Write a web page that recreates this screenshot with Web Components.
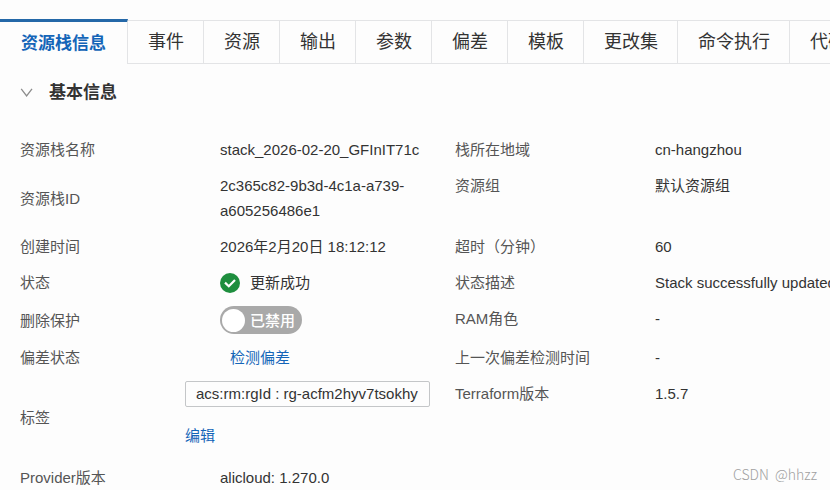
<!DOCTYPE html>
<html lang="zh-CN">
<head>
	<meta charset="UTF-8">
	<meta name="viewport" content="width=device-width, initial-scale=1">
	<title>资源栈信息</title>
	<style>
		body {
			margin: 0;
			overflow: hidden;
			background: #fdfdfd;
			color: #333;
			font: 15px/25px "Liberation Sans", "Noto Sans CJK SC", sans-serif;
		}
	</style>
</head>
<body>

<stack-page>
	<tab-strip>
		<tab-item active>资源栈信息</tab-item>
		<tab-item>事件</tab-item>
		<tab-item>资源</tab-item>
		<tab-item>输出</tab-item>
		<tab-item>参数</tab-item>
		<tab-item>偏差</tab-item>
		<tab-item>模板</tab-item>
		<tab-item>更改集</tab-item>
		<tab-item>命令执行</tab-item>
		<tab-item>代码</tab-item>
	</tab-strip>

	<info-section heading="基本信息">
		<info-field label="资源栈名称">stack_2026-02-20_GFInIT71c</info-field>
		<info-field label="栈所在地域">cn-hangzhou</info-field>

		<info-field label="资源栈ID">2c365c82-9b3d-4c1a-a739-a605256486e1</info-field>
		<info-field label="资源组">默认资源组</info-field>

		<info-field label="创建时间">2026年2月20日 18:12:12</info-field>
		<info-field label="超时（分钟）">60</info-field>

		<info-field label="状态"><status-text>更新成功</status-text></info-field>
		<info-field label="状态描述">Stack&nbsp;successfully&nbsp;updated</info-field>

		<info-field label="删除保护"><toggle-switch label="已禁用"></toggle-switch></info-field>
		<info-field label="RAM角色">-</info-field>

		<info-field label="偏差状态"><text-link indent>检测偏差</text-link></info-field>
		<info-field label="上一次偏差检测时间">-</info-field>

		<info-field label="标签" wide>
			<tag-list>
				<tag-box>acs:rm:rgId : rg-acfm2hyv7tsokhy</tag-box>
				<text-link>编辑</text-link>
			</tag-list>
		</info-field>
		<info-field label="Terraform版本">1.5.7</info-field>

		<info-field label="Provider版本">alicloud: 1.270.0</info-field>
	</info-section>

	<water-mark slot="mark">CSDN&nbsp; @hhzz</water-mark>
</stack-page>

<script>
	// Base class: attaches an open shadow root and fills it with render()
	class Base extends HTMLElement
	{
		constructor() {
			super();
			this.attachShadow({mode: 'open'});
		}

		connectedCallback() {
			this.shadowRoot.innerHTML = this.render();
		}
	}

	customElements.define('stack-page', class extends Base {
		render() {
			return `
				<style>
					:host { display: block; position: relative; min-height: 100vh; padding-top: 19px; box-sizing: border-box; }
				</style>
				<main><slot></slot></main>
				<slot name="mark"></slot>`;
		}
	});

	customElements.define('tab-strip', class extends Base {
		render() {
			return `
				<style>
					:host { display: block; }
					nav { display: flex; height: 45px; overflow: hidden; }
				</style>
				<nav role="tablist"><slot></slot></nav>`;
		}
	});

	customElements.define('tab-item', class extends Base {
		render() {
			return `
				<style>
					:host { display: flex; flex: none; }
					button {
						margin: 1px 0 0;
						padding: 0 19px 0 20px;
						border: solid #e3e4e6;
						border-width: 1px 1px 1px 0;
						background: none;
						color: #333;
						font: inherit;
						font-size: 18px;
						white-space: nowrap;
						cursor: pointer;
					}
					:host([active]) button {
						margin: 0;
						padding: 0 21px;
						border-top: 3px solid #2468a8;
						border-bottom: 0;
						color: #1465b8;
						font-size: 17px;
						font-weight: bold;
					}
				</style>
				<button role="tab" aria-selected="${this.hasAttribute('active')}"><slot></slot></button>`;
		}
	});

	customElements.define('info-section', class extends Base {
		render() {
			return `
				<style>
					:host { display: block; padding: 16px 0 0 20px; }
					header { display: flex; align-items: center; gap: 15px; }
					h2 { margin: 0; font-size: 17px; line-height: 25px; }
					button { display: flex; padding: 0; border: 0; background: none; cursor: pointer; }
					.fields {
						display: grid;
						grid-template-columns: repeat(2, minmax(435px, 1fr));
						row-gap: 11px;
						margin-top: 32px;
					}
					/* right column stays level with the first line of its row */
					::slotted(:nth-child(even)) { align-self: start; }
				</style>
				<header>
					<button aria-label="${this.getAttribute('heading')}" aria-expanded="true">
						<svg width="14" height="14" viewBox="0 0 14 14" fill="none" stroke="#8c8c8c" stroke-width="1.3">
							<path d="M1.2 2.8 6.6 10 12 2.8"/>
						</svg>
					</button>
					<h2>${this.getAttribute('heading')}</h2>
				</header>
				<div class="fields"><slot></slot></div>`;
		}
	});

	customElements.define('info-field', class extends Base {
		render() {
			return `
				<style>
					:host { display: flex; align-items: center; --label-width: 200px; }
					:host([wide]) { --label-width: 165px; }
					.label { flex: none; width: var(--label-width); color: #555; }
					.value { flex: 1; min-width: 0; }
				</style>
				<div class="label" id="label">${this.getAttribute('label')}</div>
				<div class="value" role="group" aria-labelledby="label"><slot></slot></div>`;
		}
	});

	customElements.define('status-text', class extends Base {
		render() {
			return `
				<style>
					:host { display: flex; align-items: center; gap: 10px; }
				</style>
				<svg width="20" height="20" viewBox="0 0 20 20" fill="none">
					<circle cx="10" cy="10" r="10" fill="#1e8e3e"/>
					<path d="M5 9.6 8.8 13.2 15 7" stroke="#fff" stroke-width="2.2"/>
				</svg>
				<span><slot></slot></span>`;
		}
	});

	customElements.define('toggle-switch', class extends Base {
		render() {
			return `
				<style>
					:host { display: flex; }
					label {
						display: flex;
						align-items: center;
						gap: 5px;
						height: 28px;
						padding: 0 7px 0 2px;
						border-radius: 14px;
						background: #a9a9a9;
						color: #fff;
						font-weight: 500;
						box-sizing: border-box;
						cursor: pointer;
					}
					input {
						appearance: none;
						width: 23px;
						height: 23px;
						margin: 0;
						border-radius: 50%;
						background: #fff;
					}
				</style>
				<label><input type="checkbox" role="switch"><span>${this.getAttribute('label')}</span></label>`;
		}
	});

	customElements.define('text-link', class extends Base {
		render() {
			return `
				<style>
					:host { display: block; }
					:host([indent]) { padding-left: 10px; }
					a { color: #1465b8; text-decoration: none; }
				</style>
				<a href="#"><slot></slot></a>`;
		}
	});

	customElements.define('tag-list', class extends Base {
		render() {
			return `
				<style>
					:host { display: flex; flex-direction: column; align-items: flex-start; gap: 16px; padding-bottom: 6px; }
				</style>
				<slot></slot>`;
		}
	});

	customElements.define('tag-box', class extends Base {
		render() {
			return `
				<style>
					:host {
						display: block;
						padding: 0 11px 0 10px;
						border: 1px solid #c4c6c8;
						border-radius: 2px;
						line-height: 24px;
						white-space: nowrap;
					}
				</style>
				<slot></slot>`;
		}
	});

	customElements.define('water-mark', class extends Base {
		render() {
			return `
				<style>
					:host {
						position: absolute;
						right: 13px;
						bottom: 3px;
						color: #a0a0a0;
						font-family: "Noto Sans CJK SC", sans-serif;
						font-size: 14px;
						font-weight: 300;
					}
				</style>
				<slot></slot>`;
		}
	});
</script>

</body>
</html>
